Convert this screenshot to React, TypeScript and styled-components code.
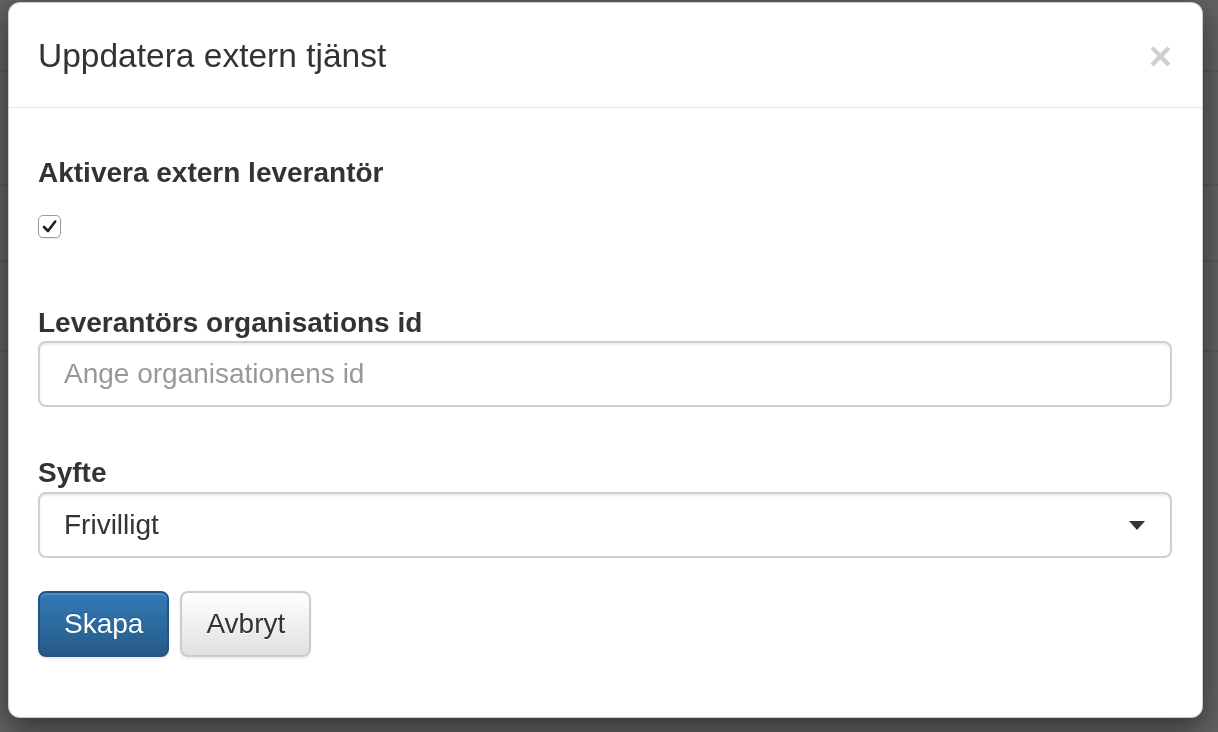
import React from "react";
import styled, { createGlobalStyle } from "styled-components";

const Global = createGlobalStyle`
  html, body { margin: 0; padding: 0; }
  body {
    width: 1218px;
    height: 732px;
    overflow: hidden;
    font-family: "Liberation Sans", Arial, sans-serif;
    color: #333;
    background: #fff;
  }
  * { box-sizing: border-box; }
`;

const Page = styled.div`
  width: 1218px;
  height: 732px;
  background: #fff;
  display: flex;
  flex-direction: column;
`;

const PageRow = styled.div<{ $h: number }>`
  height: ${(p) => p.$h}px;
  flex: none;
  border-bottom: 2px solid #e6e6e6;
`;

const Backdrop = styled.div`
  position: fixed;
  inset: 0;
  background: rgba(0, 0, 0, 0.62);
`;

const ModalLayer = styled.div`
  position: fixed;
  inset: 0;
  padding: 2px 0 0 8px;
  display: flex;
  align-items: flex-start;
`;

const Modal = styled.div`
  width: 1195px;
  background: #fff;
  border: 1px solid rgba(0, 0, 0, 0.2);
  border-radius: 12px;
  box-shadow: 0 10px 30px rgba(0, 0, 0, 0.5);
  display: flex;
  flex-direction: column;
`;

const Header = styled.div`
  height: 105px;
  padding: 2px 30px 0 29px;
  border-bottom: 1px solid #e5e5e5;
  display: flex;
  align-items: center;
  justify-content: space-between;
`;

const Title = styled.h4`
  margin: 0;
  font-size: 33.5px;
  line-height: 48px;
  font-weight: 400;
  color: #333;
`;

const Close = styled.button`
  border: 0;
  background: transparent;
  padding: 0;
  font-family: "Liberation Sans", Arial, sans-serif;
  font-size: 40px;
  font-weight: 700;
  line-height: 1;
  color: #000;
  opacity: 0.18;
  cursor: pointer;
`;

const Body = styled.div`
  padding: 47px 30px 60px 29px;
  display: flex;
  flex-direction: column;
`;

const Group = styled.div<{ $mb: number }>`
  display: flex;
  flex-direction: column;
  margin-bottom: ${(p) => p.$mb}px;
`;

const Label = styled.label<{ $mb?: number }>`
  font-size: 28px;
  line-height: 36px;
  font-weight: 700;
  color: #333;
  margin-bottom: ${(p) => p.$mb ?? 0}px;
`;

const CheckBox = styled.span`
  width: 23px;
  height: 23px;
  border: 1px solid #9d9d9d;
  border-radius: 5px;
  background: #fff;
  display: flex;
  align-items: center;
  justify-content: center;
  box-shadow: 0 1px 1px rgba(0, 0, 0, 0.08);
`;

const fieldBase = `
  width: 100%;
  height: 66px;
  border: 2px solid #cfcfcf;
  border-radius: 8px;
  background: #fff;
  box-shadow: inset 0 2px 2px rgba(0, 0, 0, 0.075);
  font-family: "Liberation Sans", Arial, sans-serif;
  font-size: 28px;
  color: #333;
  padding: 0 24px;
`;

const Input = styled.input`
  ${fieldBase}
  outline: none;
  &::placeholder { color: #999; }
`;

const Select = styled.div`
  ${fieldBase}
  display: flex;
  align-items: center;
  justify-content: space-between;
  padding-right: 25px;
`;

const Actions = styled.div`
  display: flex;
  gap: 11px;
`;

const Button = styled.button<{ $primary?: boolean }>`
  height: 66px;
  padding: 0 24px;
  border-radius: 8px;
  font-family: "Liberation Sans", Arial, sans-serif;
  font-size: 28px;
  cursor: pointer;
  border: 2px solid ${(p) => (p.$primary ? "#245580" : "#ccc")};
  color: ${(p) => (p.$primary ? "#fff" : "#333")};
  background: ${(p) =>
    p.$primary
      ? "linear-gradient(to bottom, #337ab7 0%, #265a88 100%)"
      : "linear-gradient(to bottom, #fff 0%, #e0e0e0 100%)"};
  box-shadow: inset 0 2px 0 rgba(255, 255, 255, 0.15), 0 2px 2px rgba(0, 0, 0, 0.075);
  text-shadow: ${(p) => (p.$primary ? "0 -1px 0 rgba(0,0,0,.2)" : "0 1px 0 #fff")};
`;

export default function App() {
  return (
    <>
      <Global />
      <Page>
        <PageRow $h={72} />
        <PageRow $h={114} />
        <PageRow $h={76} />
        <PageRow $h={90} />
      </Page>
      <Backdrop />
      <ModalLayer>
        <Modal>
          <Header>
            <Title>Uppdatera extern tjänst</Title>
            <Close aria-label="Stäng">×</Close>
          </Header>
          <Body>
            <Group $mb={67}>
              <Label $mb={24}>Aktivera extern leverantör</Label>
              <CheckBox>
                <svg width="17" height="17" viewBox="0 0 17 17">
                  <polyline
                    points="3,9 7,13 14.2,3.5"
                    fill="none"
                    stroke="#1e1e1e"
                    strokeWidth="2.6"
                    strokeLinecap="round"
                    strokeLinejoin="round"
                  />
                </svg>
              </CheckBox>
            </Group>
            <Group $mb={48}>
              <Label>Leverantörs organisations id</Label>
              <Input placeholder="Ange organisationens id" />
            </Group>
            <Group $mb={33}>
              <Label $mb={1}>Syfte</Label>
              <Select>
                <span>Frivilligt</span>
                <svg width="16" height="9" viewBox="0 0 16 9">
                  <polygon points="0,0 16,0 8,9" fill="#333" />
                </svg>
              </Select>
            </Group>
            <Actions>
              <Button $primary>Skapa</Button>
              <Button>Avbryt</Button>
            </Actions>
          </Body>
        </Modal>
      </ModalLayer>
    </>
  );
}
